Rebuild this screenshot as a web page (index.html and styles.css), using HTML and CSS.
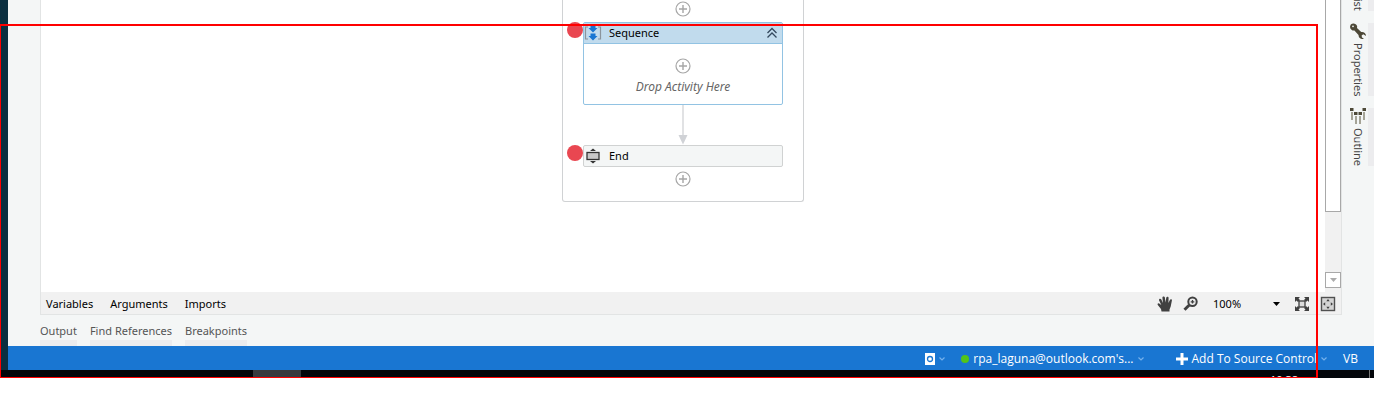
FILE: index.html
```html
<!DOCTYPE html>
<html lang="en">
<head>
<meta charset="utf-8">
<title>Workflow designer</title>
<link rel="stylesheet" href="styles.css">
</head>
<body>
<svg class="defs" aria-hidden="true">
  <symbol id="plus" viewBox="0 0 16 16"><circle cx="8" cy="8" r="7" fill="#fff" stroke="#a6a6a6" stroke-width="1.2"/><path d="M8 4v8M4 8h8" stroke="#a6a6a6" stroke-width="1.4"/></symbol>
  <symbol id="chev" viewBox="0 0 6 4"><path d="M.5 .5L3 3 5.500 .5" fill="none" stroke="#75b1ec" stroke-width="1.2"/></symbol>
</svg>
<div class="app">
  <div class="edge"></div>
  <div class="window">
    <div class="main">
      <div class="workspace">
        <div class="view">
          <main class="canvas">
            <section class="flow">
              <button class="add" aria-label="Add activity"><svg><use href="#plus"/></svg></button>
              <article class="card selected">
                <span class="dot"></span>
                <header class="head">
                  <svg class="kind" viewBox="0 0 18 18"><path d="M4 3H1.500v12H4M14 3h2.500v12H14" fill="none" stroke="#8b949c" stroke-width="1.2"/><path d="M6.500 1h5v3h2L9 8.500 4.500 4h2zM6.500 9.500h5v2.500h2L9 16.500 4.500 12h2z" fill="#1976d2"/></svg>
                  <span class="title">Sequence</span>
                  <button class="fold" aria-label="Collapse"><svg viewBox="0 0 12 12"><path d="M1.500 6L6 1.500 10.500 6M1.500 10.500L6 6l4.500 4.500" fill="none" stroke="#34495e" stroke-width="1.3"/></svg></button>
                </header>
                <div class="body">
                  <button class="add" aria-label="Add activity"><svg><use href="#plus"/></svg></button>
                  <p class="hint">Drop Activity Here</p>
                </div>
              </article>
              <svg class="arrow" viewBox="0 0 10 40"><path d="M5 0v30" stroke="#e1e2e4" stroke-width="2"/><path d="M.5 30h9L5 39.500z" fill="#d0d2d6"/></svg>
              <article class="card">
                <span class="dot"></span>
                <header class="head">
                  <svg class="kind" viewBox="0 0 18 18"><rect x="3" y="5.500" width="12" height="7" fill="#c8c8c8" stroke="#333" stroke-width="1.3"/><path d="M6 4l3-2.500L12 4zM6 14l3 2.500 3-2.500z" fill="#333"/></svg>
                  <span class="title">End</span>
                </header>
              </article>
              <button class="add last" aria-label="Add activity"><svg><use href="#plus"/></svg></button>
            </section>
          </main>
          <div class="scroll">
            <div class="thumb"></div>
            <button class="down" aria-label="Scroll down"><svg viewBox="0 0 7 4"><path d="M0 0h7L3.500 4z" fill="#ababab"/></svg></button>
          </div>
        </div>
        <div class="toolbar">
          <button>Variables</button><button>Arguments</button><button>Imports</button>
          <div class="tools">
            <button aria-label="Pan"><svg class="i16" viewBox="0 0 16 16"><path d="M4.500 15.500L4 13 .8 9C0 7.800 1.300 6.800 2.200 7.400L4.300 9 2 4.200C1.700 2.600 3.600 2.100 4.200 3.300L6 7 5.400 1.800C5.400.2 7.600.2 7.900 1.500L8.500 6.500 9.300 1.600C9.700.2 11.700.6 11.600 1.900L11.400 7 13 3.800C13.600 2.700 15.200 3.300 14.900 4.500L13.700 10.500 12.500 13.500V15.500z" fill="#404040"/></svg></button>
            <button aria-label="Zoom"><svg class="i16" viewBox="0 0 16 16"><circle cx="9.500" cy="5.800" r="4.200" fill="#eee" stroke="#404040" stroke-width="2"/><path d="M9.500 4v3.600M7.700 5.800h3.600" stroke="#404040" stroke-width="1.300"/><path d="M6.300 9L1.500 13.800" stroke="#404040" stroke-width="3"/></svg></button>
            <button class="zoom"><span>100%</span><svg viewBox="0 0 7 4"><path d="M0 0h7L3.500 4z"/></svg></button>
            <button aria-label="Fit to screen"><svg class="i16" viewBox="0 0 16 16"><rect x="5" y="5" width="6" height="6" fill="#ddd" stroke="#404040" stroke-width="1.300"/><path d="M1 1h5L4.500 2.500 6 4 4 6 2.500 4.500 1 6zM15 1v5l-1.500-1.500L12 6l-2-2 1.500-1.500L10 1zM1 15v-5l1.500 1.500L4 10l2 2-1.500 1.500L6 15zM15 15h-5l1.500-1.500L10 12l2-2 1.500 1.500L15 10z" fill="#404040"/></svg></button>
            <button aria-label="Overview"><svg class="i16" viewBox="0 0 16 16"><rect x="1.500" y="1.500" width="13" height="13" fill="#d4d4d4" stroke="#505050" stroke-width="1.400"/><path d="M8 3l1.700 2.200H6.300zM8 13l1.700-2.200H6.300zM3 8l2.200-1.700v3.400zM13 8l-2.200-1.700v3.400z" fill="#404040"/></svg></button>
          </div>
        </div>
      </div>
      <nav class="side">
        <button class="vtab cut"><span>List</span></button>
        <button class="vtab"><svg class="i16" viewBox="0 0 16 16"><path d="M.8 1.500C3 -.2 6.300.6 7.200 3.400L7 4.900 11.200 9.100C13.500 8.700 16 10 16 13L13.300 11.200 11.600 12.400 12 14.500 14 15.800C11 16.700 8.500 15 8.500 12L4.400 7.600C1.700 7.800-.5 5.500.2 3z" fill="#4d4837"/><circle cx="3" cy="3.300" r=".9" fill="#f4f6f6"/></svg><span>Properties</span></button>
        <button class="vtab"><svg class="i16" viewBox="0 0 16 16"><path d="M0 0h3.500v3H0zM12.500 0H16v3h-3.500zM4 4h3.500v3H4zM8.500 4H12v3H8.500z" fill="#4d4837"/><path d="M1 4h2v8H1zM13 4h2v8h-2zM5 8h2v8H5zM9 8h2v8H9z" fill="#a5a396"/></svg><span>Outline</span></button>
      </nav>
    </div>
    <nav class="panels"><button>Output</button><button>Find References</button><button>Breakpoints</button></nav>
    <footer class="status">
      <button class="box" aria-label="Orchestrator"><svg class="orch" viewBox="0 0 10 12"><path d="M0 0h10v12H0z" fill="#fff"/><circle cx="5" cy="6" r="2.500" fill="none" stroke="#1976d2" stroke-width="1.300"/></svg><svg class="chev"><use href="#chev"/></svg></button>
      <button class="user"><i class="online"></i><span>rpa_laguna@outlook.com's...</span><svg class="chev"><use href="#chev"/></svg></button>
      <button class="source"><svg class="cross" viewBox="0 0 12 12"><path d="M6 0v12M0 6h12" stroke="#fff" stroke-width="3"/></svg><span>Add To Source Control</span><svg class="chev"><use href="#chev"/></svg></button>
      <span class="lang">VB</span>
    </footer>
  </div>
  <div class="taskbar"><span class="task"></span><span class="clock">10:38</span><span class="desk"></span></div>
  <div class="mark"></div>
</div>
</body>
</html>
```
FILE: styles.css
```css
* { box-sizing: border-box; }
body { margin: 0; background: #fff; font: 11px/16px "Noto Sans", "Open Sans", sans-serif; color: #000; }
button { margin: 0; padding: 0; border: 0; background: none; font: inherit; color: inherit; }
svg { display: block; flex: none; }
.defs { position: absolute; width: 0; height: 0; }
.app { position: relative; margin-right: 8px; display: grid; grid-template-columns: 8px 1fr; }
.edge { background: #0b2f40; }
.window { min-width: 0; background: #f4f6f6; }
.main { display: flex; padding-left: 32px; }
.workspace { flex: 1; border: 1px solid #e2e4e4; border-top: 0; }
.view { display: flex; background: #fff; }
.canvas { flex: 1; padding-bottom: 90px; }
.flow { width: 242px; margin: 0 auto; padding: 1px 20px 14px; border: 1px solid #d0d2d4; border-top: 0; border-radius: 0 0 3px 3px; display: flex; flex-direction: column; align-items: center; }
.add svg { width: 16px; height: 16px; }
.card { position: relative; width: 100%; margin-top: 5px; border: 1px solid #d0d2d2; border-radius: 2px; background: #f4f6f6; }
.selected { border-color: #92c3e3; background: #fff; }
.arrow + .card { margin-top: 0; }
.dot { position: absolute; left: -17px; top: -1px; width: 16px; height: 16px; border-radius: 50%; background: #e94751; }
.head { display: flex; align-items: center; height: 20px; padding: 0 4px 1px 0; gap: 7px; }
.selected .head { height: 21px; background: #c1dbed; border-bottom: 1px solid #92c3e3; }
.kind { width: 18px; height: 18px; }
.title { flex: 1; }
.fold svg { width: 12px; height: 12px; }
.body { padding: 14px 0 9px; display: flex; flex-direction: column; align-items: center; }
.hint { margin: 5px 0 0; font-size: 12px; font-style: italic; color: #666; }
.arrow { width: 10px; height: 40px; }
.last { margin-top: 4px; }
.scroll { width: 16px; padding: 0 0 4px; background: #f1f1f1; display: flex; flex-direction: column; justify-content: space-between; }
.thumb { height: 212px; background: #fff; border: 1px solid #a8a8a8; border-top: 0; }
.down { height: 16px; background: #fff; border: 1px solid #a8a8a8; display: grid; place-items: center; }
.down svg { width: 7px; height: 4px; }
.toolbar { display: flex; align-items: center; gap: 17px; height: 22px; padding: 1px 5px 0; background: #f1f1f1; }
.tools { margin-left: auto; display: flex; gap: 10px; align-items: center; }
.i16 { width: 16px; height: 16px; }
.zoom { display: flex; align-items: center; justify-content: space-between; width: 75px; padding: 0 4px; }
.zoom svg { width: 7px; height: 4px; }
.side { width: 32px; display: flex; flex-direction: column; gap: 12px; }
.vtab { writing-mode: vertical-rl; display: flex; align-items: center; justify-content: flex-end; gap: 4px; align-self: stretch; color: #444; padding-left: 6px; border-right: 6px solid #ececee; }
.cut { height: 11px; overflow: hidden; }
.panels { display: flex; gap: 13px; padding: 8px 32px 0; color: #555; }
.panels button { border-bottom: 6px solid #ececee; padding-bottom: 1px; }
.status { display: flex; justify-content: flex-end; align-items: center; height: 24px; padding: 1px 16px 0 0; background: #1976d2; color: #fff; font-family: "Open Sans", sans-serif; font-size: 12px; }
.status button { display: flex; align-items: center; gap: 4px; }
.chev { width: 6px; height: 4px; }
.orch { width: 10px; height: 12px; }
.online { width: 8px; height: 8px; border-radius: 50%; background: #52c41a; }
.user { margin: 0 32px 0 16px; }
.source { margin-right: 16px; }
.cross { width: 12px; height: 12px; }
.taskbar { grid-column: 1 / -1; display: flex; height: 8px; padding-left: 253px; background: #03060a; color: #fff; overflow: hidden; }
.task { width: 48px; background: #373a3e; }
.clock { margin: 2px 71px 0 auto; }
.desk { width: 1px; margin-right: 4px; background: #777; }
.mark { position: absolute; inset: 24px 56px 0 0; border: solid red; border-width: 2px 2px 1px 1px; pointer-events: none; }
```
